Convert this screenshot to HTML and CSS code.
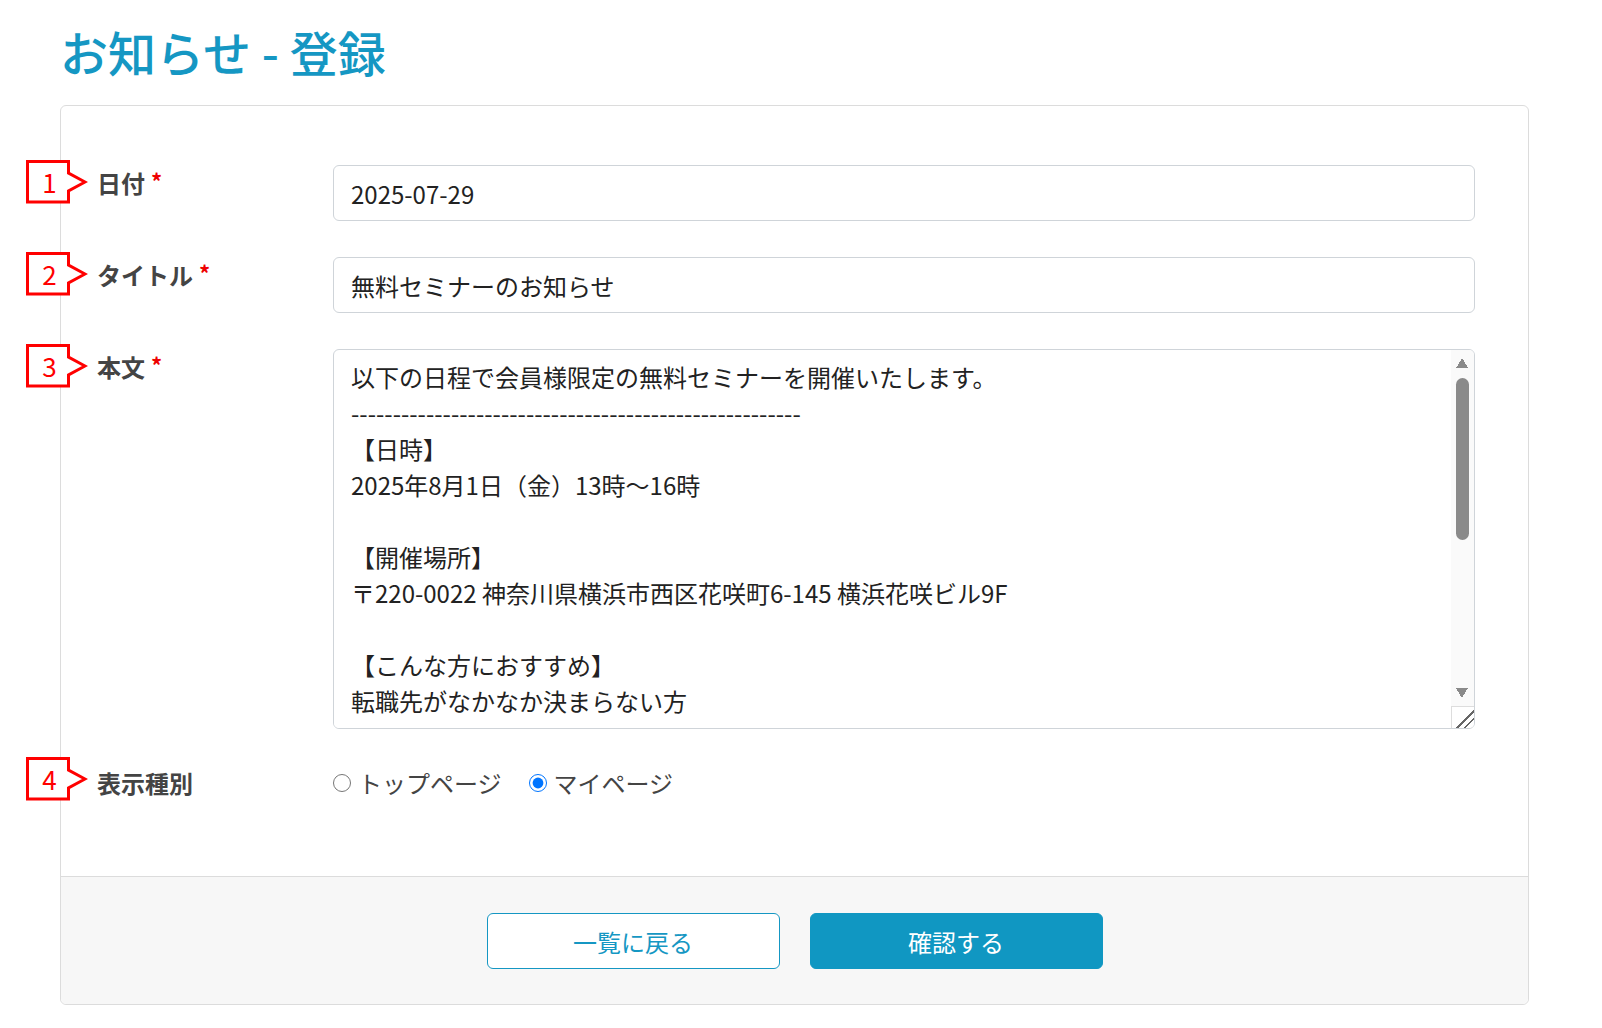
FILE: index.html
```html
<!DOCTYPE html>
<html lang="ja">
<head>
<meta charset="utf-8">
<title>お知らせ - 登録</title>
<link rel="stylesheet" href="styles.css">
</head>
<body>
<main class="page">
  <h1 class="page-title">お知らせ - 登録</h1>
  <section class="card">
    <div class="card-body">
      <div class="form-row">
        <div class="annot"><svg class="annot-shape" width="62" height="46" viewBox="0 0 62 46"><path d="M1.5 1.5 H42.5 V13 L59 22 L42.5 31 V42 H1.5 Z" fill="#fff" stroke="#ff0000" stroke-width="3"/></svg><span class="annot-num">1</span></div>
        <label class="form-label">日付<span class="req">*</span></label>
        <div class="form-field"><input class="form-control" type="text" value="2025-07-29"></div>
      </div>
      <div class="form-row">
        <div class="annot"><svg class="annot-shape" width="62" height="46" viewBox="0 0 62 46"><path d="M1.5 1.5 H42.5 V13 L59 22 L42.5 31 V42 H1.5 Z" fill="#fff" stroke="#ff0000" stroke-width="3"/></svg><span class="annot-num">2</span></div>
        <label class="form-label">タイトル<span class="req">*</span></label>
        <div class="form-field"><input class="form-control" type="text" value="無料セミナーのお知らせ"></div>
      </div>
      <div class="form-row">
        <div class="annot"><svg class="annot-shape" width="62" height="46" viewBox="0 0 62 46"><path d="M1.5 1.5 H42.5 V13 L59 22 L42.5 31 V42 H1.5 Z" fill="#fff" stroke="#ff0000" stroke-width="3"/></svg><span class="annot-num">3</span></div>
        <label class="form-label">本文<span class="req">*</span></label>
        <div class="form-field textarea-wrap"><textarea class="form-control form-textarea">以下の日程で会員様限定の無料セミナーを開催いたします。
------------------------------------------------------
【日時】
2025年8月1日（金）13時～16時

【開催場所】
〒220-0022 神奈川県横浜市西区花咲町6-145 横浜花咲ビル9F

【こんな方におすすめ】
転職先がなかなか決まらない方
キャリアアップを目指している方
自分の強みを見つけたい方

【参加費】
無料

【お申し込み方法】
マイページのお申し込みフォームよりお申し込みください。
</textarea>
          <div class="ta-mask" aria-hidden="true"></div>
          <div class="fake-scrollbar" aria-hidden="true">
            <div class="sb-btn sb-up"></div>
            <div class="sb-track"><div class="sb-thumb"></div></div>
            <div class="sb-btn sb-down"></div>
            <div class="sb-corner"></div>
          </div>
        </div>
      </div>
      <div class="form-row form-row-last">
        <div class="annot annot-raised"><svg class="annot-shape" width="62" height="46" viewBox="0 0 62 46"><path d="M1.5 1.5 H42.5 V13 L59 22 L42.5 31 V42 H1.5 Z" fill="#fff" stroke="#ff0000" stroke-width="3"/></svg><span class="annot-num">4</span></div>
        <label class="form-label">表示種別</label>
        <div class="form-field radio-group">
          <label class="radio"><input type="radio" name="kind" value="top"><span>トップページ</span></label>
          <label class="radio"><input type="radio" name="kind" value="mypage" checked><span>マイページ</span></label>
        </div>
      </div>
    </div>
    <div class="card-footer">
      <button class="btn btn-outline" type="button">一覧に戻る</button>
      <button class="btn btn-primary" type="button">確認する</button>
    </div>
  </section>
</main>
</body>
</html>
```
FILE: styles.css
```css
* {
  box-sizing: border-box;
}

html, body {
  margin: 0;
  padding: 0;
  background: #ffffff;
}

body {
  font-family: "Noto Sans CJK JP", "Noto Sans", sans-serif;
  color: #444444;
  font-size: 24px;
}

.page {
  padding-left: 60px;
  width: 1529px;
}

.page-title {
  margin: 22px 0 25px 0;
  font-size: 48px;
  line-height: 58px;
  font-weight: 500;
  color: #1597c3;
}

.card {
  border: 1px solid #dcdcdc;
  border-radius: 6px;
  background: #ffffff;
}

.card-body {
  padding: 59px 53px 75px 36px;
}

.form-row {
  position: relative;
  display: grid;
  grid-template-columns: 236px 1fr;
  margin-bottom: 36px;
}

.form-row-last {
  margin-bottom: 0;
}

.annot {
  position: absolute;
  left: -71px;
  top: -5px;
  width: 62px;
  height: 46px;
}

.annot-raised {
  top: -8px;
}

.annot-shape {
  display: block;
}

.annot-num {
  position: absolute;
  left: 0;
  top: 0;
  width: 47px;
  height: 44px;
  line-height: 43px;
  text-align: center;
  font-size: 26px;
  color: #ff0000;
}

.form-label {
  font-weight: 700;
  font-size: 24px;
  line-height: 36px;
  color: #444444;
}

.req {
  color: #ee0000;
  font-size: 22px;
  margin-left: 6px;
  vertical-align: top;
  line-height: 30px;
}

.form-control {
  display: block;
  width: 100%;
  height: 56px;
  border: 1px solid #cfd4d9;
  border-radius: 6px;
  padding: 0 17px;
  font-family: "Noto Sans CJK JP", "Noto Sans", sans-serif;
  font-size: 24px;
  color: #222222;
  background: #ffffff;
  outline: none;
}

.textarea-wrap {
  position: relative;
}

.form-textarea {
  height: 380px;
  padding: 9px 30px 12px 17px;
  line-height: 36px;
  resize: none;
  overflow: hidden;
  white-space: pre-wrap;
}

.ta-mask {
  position: absolute;
  left: 1px;
  right: 24px;
  bottom: 1px;
  height: 10px;
  background: #ffffff;
  border-radius: 0 0 0 5px;
}

.fake-scrollbar {
  position: absolute;
  top: 1px;
  right: 1px;
  bottom: 1px;
  width: 23px;
  display: flex;
  flex-direction: column;
  background: #fafafa;
  border-radius: 0 5px 5px 0;
}

.sb-btn {
  height: 23px;
  flex: none;
}

.sb-up {
  background:
    linear-gradient(to bottom right, transparent 50%, #8a8a8a 50%) 5px 8px / 6px 10px no-repeat,
    linear-gradient(to bottom left, transparent 50%, #8a8a8a 50%) 11px 8px / 6px 10px no-repeat;
}

.sb-down {
  background:
    linear-gradient(to top right, transparent 50%, #8a8a8a 50%) 5px 5px / 6px 10px no-repeat,
    linear-gradient(to top left, transparent 50%, #8a8a8a 50%) 11px 5px / 6px 10px no-repeat;
}

.sb-track {
  flex: 1;
  padding: 5px 5px 0 5px;
}

.sb-thumb {
  height: 162px;
  border-radius: 7px;
  background: #8a8a8a;
}

.sb-corner {
  height: 22px;
  flex: none;
  background:
    linear-gradient(135deg, transparent 0 58%, #666666 58% 63%, transparent 63% 76%, #666666 76% 81%, transparent 81%),
    #ffffff;
  border-top: 1px solid #dddddd;
  border-left: 1px solid #dddddd;
  border-radius: 0 0 5px 0;
}

.radio-group {
  display: flex;
  align-items: center;
  gap: 27px;
  height: 36px;
}

.radio {
  display: flex;
  align-items: center;
  gap: 7px;
  font-size: 24px;
  line-height: 36px;
  color: #444444;
}

.radio input {
  width: 18px;
  height: 18px;
  margin: 0;
}

.card-footer {
  border-top: 1px solid #dcdcdc;
  background: #f7f7f7;
  border-radius: 0 0 6px 6px;
  padding: 36px 0 35px 0;
  display: flex;
  justify-content: center;
  gap: 30px;
}

.btn {
  width: 293px;
  height: 56px;
  border-radius: 6px;
  font-family: "Noto Sans CJK JP", "Noto Sans", sans-serif;
  font-size: 24px;
  cursor: pointer;
}

.btn-outline {
  background: #ffffff;
  border: 1px solid #1597c3;
  color: #1597c3;
}

.btn-primary {
  background: #1097c2;
  border: 1px solid #1097c2;
  color: #ffffff;
}
```
